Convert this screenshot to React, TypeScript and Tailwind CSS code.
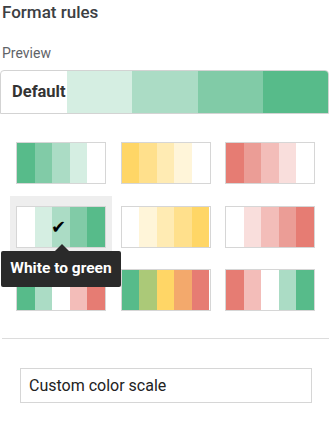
import React from "react";

const G = ["#57bb8a", "#81cba7", "#abdcc5", "#d5eee2", "#ffffff"];
const Y = ["#ffd666", "#ffe08c", "#ffebb3", "#fff5d9", "#ffffff"];
const R = ["#e67c73", "#eb9d96", "#f3bdb9", "#f9dedc", "#ffffff"];

const scales: string[][] = [
  G,
  Y,
  R,
  [...G].reverse(),
  [...Y].reverse(),
  [...R].reverse(),
  ["#57bb8a", "#abdcc5", "#ffffff", "#f3bdb9", "#e67c73"],
  ["#57bb8a", "#abc978", "#ffd666", "#f3a96c", "#e67c73"],
  ["#e67c73", "#f3bdb9", "#ffffff", "#abdcc5", "#57bb8a"],
];

function Swatch({ colors, check }: { colors: string[]; check?: boolean }) {
  return (
    <div className="relative flex h-[42px] w-[90px] border border-[#d6d6d6]">
      {colors.map((c, i) => (
        <div key={i} className="h-full flex-1" style={{ backgroundColor: c }} />
      ))}
      {check && (
        <span
          className="absolute left-[34px] top-[9px] text-[18px] leading-[22px] text-black"
          style={{ fontFamily: '"DejaVu Sans", sans-serif' }}
        >
          ✔
        </span>
      )}
    </div>
  );
}

export default function App() {
  return (
    <div
      className="relative h-[429px] w-[330px] overflow-hidden bg-white"
      style={{ fontFamily: "Roboto, sans-serif" }}
    >
      <div className="pl-[2px] text-[17px] font-medium leading-[24px] text-[#3c4043]">
        Format rules
      </div>
      <div className="mt-[19px] pl-[2px] text-[14px] leading-[20px] text-[#5f6368]">
        Preview
      </div>
      <div className="mt-[7px] flex h-[44px] w-[329px] overflow-hidden rounded-t-[4px] border border-[#d3d3d3]">
        <div className="flex w-[66px] items-center pl-[11px] text-[16.5px] font-bold text-[#333333]">
          Default
        </div>
        <div className="flex-1 bg-[#d5eee2]" />
        <div className="flex-1 bg-[#abdcc5]" />
        <div className="flex-1 bg-[#81cba7]" />
        <div className="flex-1 bg-[#57bb8a]" />
      </div>

      <div className="ml-[10px] mt-[18px] grid w-[311px] grid-cols-[102px_102px_102px] gap-x-[2.5px] gap-y-[8.5px]">
        {scales.map((s, i) => (
          <div
            key={i}
            className={`flex h-[55px] justify-center pt-[10px] ${i === 3 ? "bg-[#eeeeee]" : ""}`}
          >
            <Swatch colors={s} check={i === 3} />
          </div>
        ))}
      </div>

      <div className="ml-[2px] mt-[24px] h-px w-[327px] bg-[#dcdcdc]" />

      <div className="ml-[20px] mt-[29px] flex h-[35px] w-[292px] items-center border border-[#d6d6d6] pl-[8px] text-[16px] text-[#222222]">
        Custom color scale
      </div>

      <div className="absolute left-[1px] top-[251px] flex h-[36px] w-[120px] items-center justify-center rounded-[2px] bg-[#2a2a2a] text-[15.5px] font-bold text-white">
        White to green
        <div className="absolute left-[54px] top-[-7px] h-0 w-0 border-x-[7px] border-b-[7px] border-x-transparent border-b-[#2a2a2a]" />
      </div>
    </div>
  );
}
